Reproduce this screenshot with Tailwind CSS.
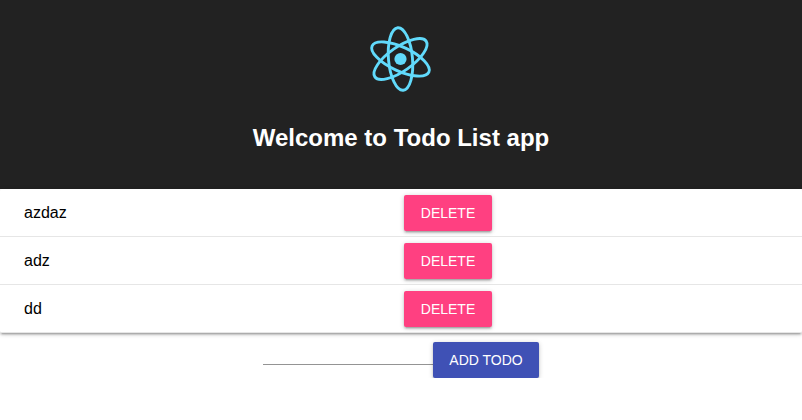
<!DOCTYPE html>
<html lang="en">
<head>
<meta charset="utf-8">
<title>Todo List</title>
<script src="https://cdn.jsdelivr.net/npm/@tailwindcss/browser@4"></script>
</head>
<body class="bg-white text-black font-['Liberation_Sans',Arial,sans-serif] overflow-hidden">
<header class="h-[189px] bg-[#222] flex flex-col items-center pt-[19px] text-white">
  <svg class="w-20 h-20 shrink-0" viewBox="-40 -40 80 80" fill="none" stroke="#61dafb" stroke-width="2.9">
    <g transform="translate(-.5 0) rotate(-5)">
      <ellipse rx="12" ry="31.3"/>
      <ellipse rx="12" ry="31.3" transform="rotate(60)"/>
      <ellipse rx="12" ry="31.3" transform="rotate(120)"/>
    </g>
    <circle cx="-.5" r="6.1" fill="#61dafb" stroke="none"/>
  </svg>
  <h1 class="mt-[25px] text-[24px] leading-[27px] font-bold">Welcome to Todo List app</h1>
</header>
<main>
  <ul class="relative bg-white rounded-[2px] shadow-[0_1px_5px_0_rgba(0,0,0,0.2),0_2px_2px_0_rgba(0,0,0,0.14),0_3px_1px_-2px_rgba(0,0,0,0.12)]">
    <li class="h-12 flex items-center border-b border-[#e6e6e6] pl-6">
      <span class="w-[380px] text-base">azdaz</span>
      <button class="w-[88px] h-9 rounded-[2px] bg-[#ff4081] text-white text-sm shadow-[0_1px_5px_0_rgba(0,0,0,0.2),0_2px_2px_0_rgba(0,0,0,0.14),0_3px_1px_-2px_rgba(0,0,0,0.12)]">DELETE</button>
    </li>
    <li class="h-12 flex items-center border-b border-[#e6e6e6] pl-6">
      <span class="w-[380px] text-base">adz</span>
      <button class="w-[88px] h-9 rounded-[2px] bg-[#ff4081] text-white text-sm shadow-[0_1px_5px_0_rgba(0,0,0,0.2),0_2px_2px_0_rgba(0,0,0,0.14),0_3px_1px_-2px_rgba(0,0,0,0.12)]">DELETE</button>
    </li>
    <li class="h-12 flex items-center border-b border-[#e6e6e6] pl-6">
      <span class="w-[380px] text-base">dd</span>
      <button class="w-[88px] h-9 rounded-[2px] bg-[#ff4081] text-white text-sm shadow-[0_1px_5px_0_rgba(0,0,0,0.2),0_2px_2px_0_rgba(0,0,0,0.14),0_3px_1px_-2px_rgba(0,0,0,0.12)]">DELETE</button>
    </li>
  </ul>
  <form class="mt-[9px] flex justify-center items-start">
    <input type="text" aria-label="New todo" class="w-[170px] h-[23px] border-b border-[#949494] outline-none">
    <button type="button" class="w-[106px] h-9 rounded-[2px] bg-[#3f51b5] text-white text-sm shadow-[0_1px_5px_0_rgba(0,0,0,0.2),0_2px_2px_0_rgba(0,0,0,0.14),0_3px_1px_-2px_rgba(0,0,0,0.12)]">ADD TODO</button>
  </form>
</main>
</body>
</html>
